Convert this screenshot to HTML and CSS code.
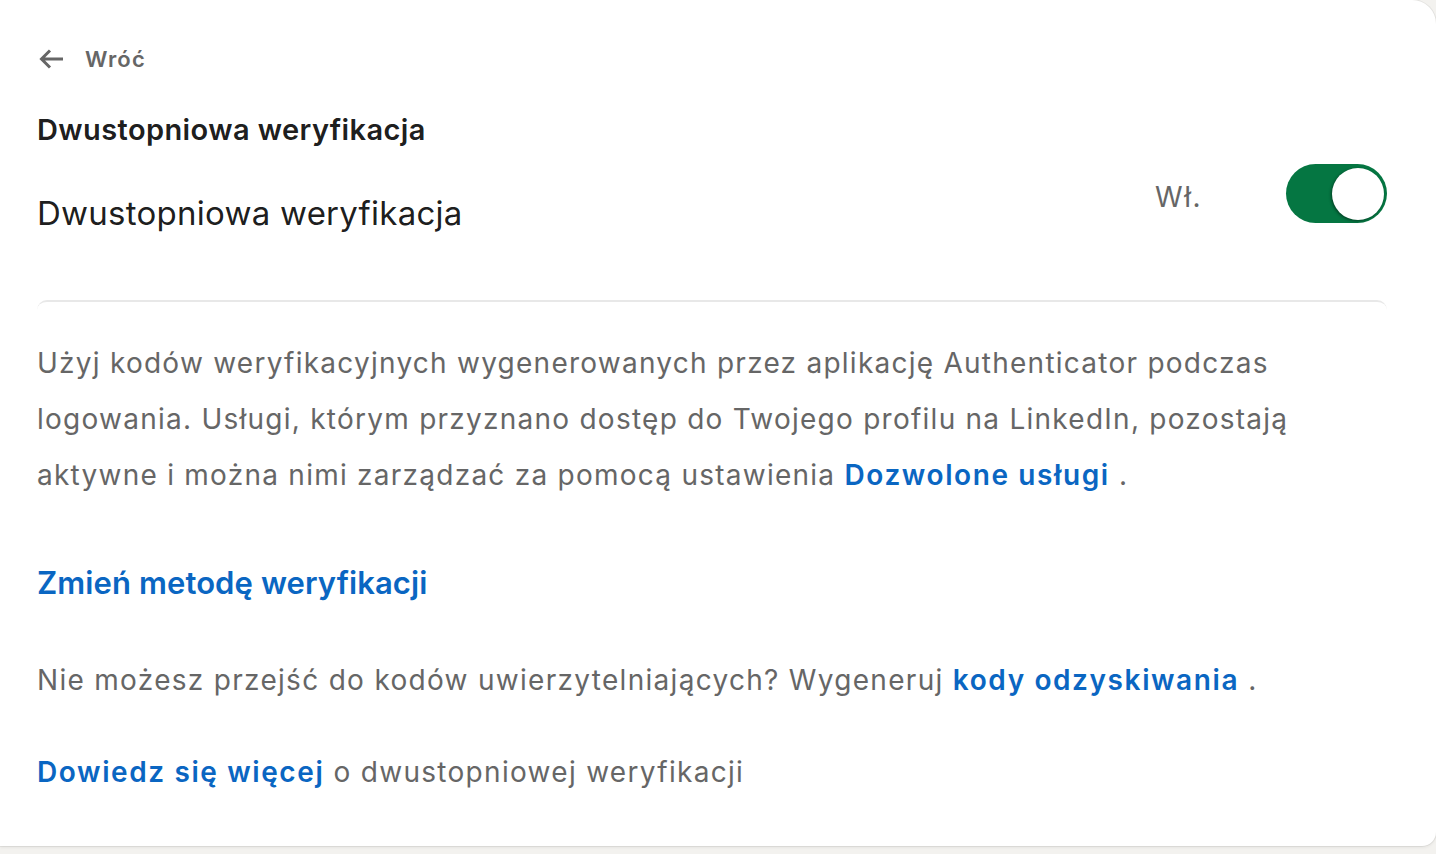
FILE: index.html
```html
<!DOCTYPE html>
<html lang="pl">
<head>
<meta charset="utf-8">
<link rel="stylesheet" href="styles.css">
</head>
<body>
<main class="card">
  <a class="back" href="#">
    <svg class="back-icon" viewBox="0 0 28 28" width="28" height="28" aria-hidden="true">
      <path d="M26 14H5M13 5.5L4.5 14 13 22.5" fill="none" stroke="#666" stroke-width="3" stroke-linecap="butt" stroke-linejoin="miter"/>
    </svg>
    <span>Wróć</span>
  </a>
  <h1 class="page-title">Dwustopniowa weryfikacja</h1>
  <div class="setting-row">
    <h2 class="setting-title">Dwustopniowa weryfikacja</h2>
    <div class="toggle-wrap">
      <span class="toggle-label">Wł.</span>
      <span class="toggle"><span class="knob"></span></span>
    </div>
  </div>
  <div class="divider"></div>
  <p class="desc">Użyj kodów weryfikacyjnych wygenerowanych przez aplikację Authenticator podczas logowania. Usługi, którym przyznano dostęp do Twojego profilu na LinkedIn, pozostają aktywne i można nimi zarządzać za pomocą ustawienia <a class="link" href="#">Dozwolone usługi</a> .</p>
  <a class="link change" href="#">Zmień metodę weryfikacji</a>
  <p class="note">Nie możesz przejść do kodów uwierzytelniających? Wygeneruj <a class="link" href="#">kody odzyskiwania</a> .</p>
  <p class="note learn"><a class="link" href="#">Dowiedz się więcej</a> o dwustopniowej weryfikacji</p>
</main>
</body>
</html>
```
FILE: styles.css
```css
* { box-sizing: border-box; }
html, body { margin: 0; padding: 0; }
body {
  background: #f3f2ef;
  font-family: Inter, "Noto Sans", "Liberation Sans", sans-serif;
  color: rgba(0,0,0,0.9);
  height: 854px;
  overflow: hidden;
}
.card {
  background: #fff;
  height: 846px;
  border-radius: 0 24px 14px 0;
  box-shadow: 0 0 0 1px rgba(0,0,0,0.06), 0 2px 3px rgba(0,0,0,0.05);
  padding: 40px 49px 0 37px;
  display: flex;
  flex-direction: column;
}
.back {
  display: flex;
  align-items: center;
  gap: 20px;
  text-decoration: none;
  color: #666;
  font-size: 22px;
  font-weight: 600;
  letter-spacing: 1.2px;
  height: 38px;
}
.back-icon { display: block; }
.page-title {
  margin: 32px 0 0;
  font-size: 29px;
  font-weight: 600;
  letter-spacing: 0.4px;
  line-height: 40px;
  color: rgba(0,0,0,0.9);
}
.setting-row {
  display: flex;
  align-items: flex-start;
  justify-content: space-between;
  margin-top: 14px;
}
.setting-title {
  margin: 25px 0 0;
  font-size: 33px;
  font-weight: 400;
  letter-spacing: 0.25px;
  line-height: 48px;
  color: rgba(0,0,0,0.9);
}
.toggle-wrap {
  display: flex;
  align-items: center;
  gap: 84px;
}
.toggle-label {
  font-size: 28px;
  letter-spacing: 1.5px;
  color: #666;
  margin-top: 6px;
}
.toggle {
  width: 101px;
  height: 59px;
  border-radius: 30px;
  background: #057642;
  display: flex;
  align-items: center;
  justify-content: flex-end;
  padding-right: 3px;
}
.knob {
  width: 52px;
  height: 52px;
  border-radius: 50%;
  background: #fff;
  box-shadow: -1px 1px 3px rgba(0,0,0,0.45);
}
.divider {
  margin-top: 63px;
  height: 12px;
  border-top: 2px solid #e8e8e8;
  border-radius: 10px 10px 0 0;
}
.desc {
  margin: 23px 0 0;
  font-size: 28px;
  letter-spacing: 1.25px;
  line-height: 56px;
  color: #666;
}
.link {
  color: #0a66c2;
  font-weight: 600;
  text-decoration: none;
}
.desc .link, .note .link { letter-spacing: 1.6px; }
.change {
  display: block;
  margin-top: 56px;
  font-size: 31px;
  letter-spacing: 0.1px;
  line-height: 48px;
}
.note {
  margin: 53px 0 0;
  font-size: 28px;
  letter-spacing: 1.3px;
  line-height: 40px;
  color: #666;
}
.learn { margin-top: 52px; }
```
